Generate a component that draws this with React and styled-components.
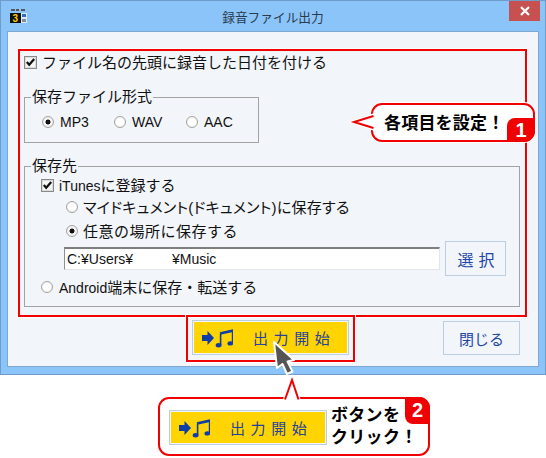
import React from "react";
import styled, { createGlobalStyle } from "styled-components";

const Global = createGlobalStyle`
  html, body { margin: 0; padding: 0; background: #fff; }
  * { box-sizing: border-box; }
`;

const UI = `"Liberation Sans", "Noto Sans CJK JP", sans-serif`;

const Page = styled.div`
  position: relative;
  width: 546px;
  height: 458px;
  overflow: hidden;
  background: #fff;
  font-family: ${UI};
  font-size: 15px;
  color: #111;
`;

const Win = styled.div`
  width: 546px;
  height: 375px;
  display: flex;
  flex-direction: column;
  background: #8ac4f9;
  border: 1px solid #6f9cc9;
`;

const TitleBar = styled.div`
  position: relative;
  height: 30px;
  flex: none;
  display: flex;
  align-items: center;
  justify-content: center;
  color: #2b3a4c;
  font-size: 12.7px;
`;

const AppIcon = styled.svg`
  position: absolute;
  left: 9px;
  top: 7px;
`;

const CloseBtn = styled.div`
  position: absolute;
  right: 5px;
  top: 0;
  width: 31px;
  height: 20px;
  background: #c75050;
  display: flex;
  align-items: center;
  justify-content: center;
`;

const Client = styled.div`
  flex: 1;
  margin: 0 6px 7px 6px;
  background: #f2f5f9;
  border: 1px solid #7fa8d0;
  padding: 20px 17px 0 16px;
  display: flex;
  flex-direction: column;
`;

const Row = styled.div`
  display: flex;
  align-items: center;
  height: 20px;
  margin-left: ${(p) => p.$indent || 0}px;
  margin-top: ${(p) => p.$top || 0}px;
  flex: none;
  white-space: nowrap;
`;

const Label = styled.span`
  margin-bottom: 2px;
  letter-spacing: ${(p) => p.$ls || 0}px;
  font-feature-settings: ${(p) => (p.$tight ? '"palt"' : "normal")};
`;

const Box = styled.span`
  width: 13px;
  height: 13px;
  flex: none;
  margin-right: 5px;
  background: #f6f6f6;
  border: 1px solid #8a8a8a;
  box-shadow: inset 0 0 0 1px #dcdcdc;
  display: flex;
  align-items: center;
  justify-content: center;
`;

const Dot = styled.span`
  width: 12px;
  height: 12px;
  flex: none;
  margin-right: ${(p) => p.$gap || 6}px;
  border-radius: 50%;
  background: ${(p) => (p.$on ? "radial-gradient(circle, #111 0 2.2px, #f6f6f6 2.8px)" : "#fff")};
  border: 1px solid #a4a4a4;
  box-shadow: inset 0 0 1px #ccc, 0 0 1px #eee;
`;

const RadioItem = styled.div`
  display: flex;
  align-items: center;
  width: 72px;
`;

const Lat = styled.span`
  font-size: 14px;
`;

const Group = styled.fieldset`
  margin: ${(p) => p.$top}px 0 0 0;
  width: ${(p) => p.$width}px;
  padding: 0 0 ${(p) => p.$pb}px 6px;
  border: 1px solid #a3a3a3;
  flex: none;
`;

const Legend = styled.legend`
  padding: 0 1px;
  margin: 0;
  height: 18px;
  line-height: 18px;
`;

const PathRow = styled.div`
  display: flex;
  align-items: center;
  gap: 5px;
  height: 35px;
  margin-left: 33px;
`;

const PathField = styled.div`
  width: 376px;
  height: 23px;
  background: #fff;
  border-style: solid;
  border-width: 2px 1px 1px 1px;
  border-color: #7e7e7e #e3e6e9 #e3e6e9 #8f8f8f;
  padding-left: 2px;
  line-height: 20px;
  font-size: 14px;
  white-space: pre;
`;

const Btn = styled.div`
  width: ${(p) => p.$w}px;
  height: ${(p) => p.$h}px;
  flex: none;
  display: flex;
  align-items: center;
  justify-content: center;
  margin-top: ${(p) => p.$top || 0}px;
  padding-left: ${(p) => p.$pl || 0}px;
  border: 1px solid #bccfe0;
  background: #f2f5f9;
  color: #2347a8;
  font-size: ${(p) => p.$fs || 15}px;
  letter-spacing: ${(p) => p.$ls || 0}px;
`;

const Footer = styled.div`
  display: flex;
  align-items: flex-start;
  margin: 13px 1px 0 168px;
  justify-content: space-between;
`;

const StartOuter = styled.div`
  width: ${(p) => p.$w}px;
  height: ${(p) => p.$h}px;
  flex: none;
  padding: 1px;
  border: 1px solid #bccfe0;
  background: #f2f5f9;
`;

const StartInner = styled.div`
  width: 100%;
  height: 100%;
  background: #ffd400;
  display: flex;
  align-items: center;
  padding-left: 8px;
  color: #24429a;
  font-size: 15px;
  letter-spacing: 5.6px;
`;

const StartLabel = styled.span`
  margin-left: 20px;
`;

/* overlays */
const RedFrame = styled.div`
  position: absolute;
  left: ${(p) => p.$x}px;
  top: ${(p) => p.$y}px;
  width: ${(p) => p.$w}px;
  height: ${(p) => p.$h}px;
  border: 2px solid #f00000;
  outline: 1px solid #fff;
`;

const Bubble = styled.div`
  position: absolute;
  left: ${(p) => p.$x}px;
  top: ${(p) => p.$y}px;
  width: ${(p) => p.$w}px;
  height: ${(p) => p.$h}px;
  background: #fff;
  border: 2px solid #f00000;
  border-radius: 11px;
  box-shadow: 0 0 0 1px #fff;
`;

const BubbleText = styled.div`
  font-family: "Noto Sans CJK JP", sans-serif;
  font-weight: 700;
  font-size: 17px;
  line-height: 22px;
  color: #000;
  position: absolute;
  white-space: nowrap;
`;

const Callout1Text = styled(BubbleText)`
  left: 11px;
  top: 6px;
  letter-spacing: 0.2px;
`;

const Callout2Text = styled(BubbleText)`
  left: 171px;
  top: 4px;
  letter-spacing: 0.3px;
`;

const Badge = styled.div`
  position: absolute;
  right: -2px;
  background: #f00000;
  color: #fff;
  font-family: "Liberation Sans", sans-serif;
  font-weight: 700;
  font-size: 20px;
  display: flex;
  align-items: center;
  justify-content: center;
`;

const BadgeBottom = styled(Badge)`
  bottom: -2px;
  width: 28px;
  height: 24px;
  border-radius: 8px 0 11px 0;
`;

const BadgeTop = styled(Badge)`
  top: -2px;
  width: 25px;
  height: 27px;
  border-radius: 0 11px 0 8px;
`;

const Tail = styled.svg`
  position: absolute;
  overflow: visible;
  left: ${(p) => p.$x}px;
  top: ${(p) => p.$y}px;
`;

const MiniBtn = styled.div`
  position: absolute;
  left: 9px;
  top: 11px;
`;

const Arrow = () => (
  <svg width="31" height="22" viewBox="0 0 31 22" style={{ flex: "none" }}>
    <path d="M0 8h5.5V4l6.5 7-6.5 7v-4H0z" fill="#0f3da8" />
    <path d="M18.6 18V7M30.6 16V4" stroke="#0f3da8" strokeWidth="1.6" fill="none" />
    <path d="M18 6.6L31.2 3.6" stroke="#0f3da8" strokeWidth="2.6" fill="none" />
    <ellipse cx="16.6" cy="18.2" rx="2.9" ry="2.2" fill="#0f3da8" />
    <ellipse cx="28.4" cy="16.4" rx="2.9" ry="2.2" fill="#0f3da8" />
  </svg>
);

const Check = () => (
  <svg width="11" height="11" viewBox="0 0 11 11">
    <path d="M1.8 5l2.4 2.8L9.2 2" stroke="#111" strokeWidth="2.2" fill="none" />
  </svg>
);

const StartButton = ({ w, h }) => (
  <StartOuter $w={w} $h={h}>
    <StartInner>
      <Arrow />
      <StartLabel>出力開始</StartLabel>
    </StartInner>
  </StartOuter>
);

export default function App() {
  return (
    <Page>
      <Global />
      <Win>
        <TitleBar>
          <AppIcon width="17" height="16" viewBox="0 0 17 16">
            <rect x="1" y="1" width="4" height="2" fill="#555" />
            <rect x="6" y="1" width="3" height="2" fill="#555" />
            <rect x="11" y="1" width="4" height="2" fill="#555" />
            <rect x="0" y="5" width="11" height="10" fill="#111" />
            <text x="2.5" y="14" fontSize="10" fontWeight="700" fill="#f4d000" fontFamily="Liberation Sans">3</text>
            <rect x="11" y="5" width="6" height="10" fill="#dfe8f2" />
            <rect x="12" y="6" width="4" height="3" fill="#2f6fb5" />
            <rect x="12" y="11" width="4" height="3" fill="#7d8ea0" />
          </AppIcon>
          録音ファイル出力
          <CloseBtn>
            <svg width="10" height="10" viewBox="0 0 10 10">
              <path d="M1 1l8 8M9 1l-8 8" stroke="#fff" strokeWidth="2.2" />
            </svg>
          </CloseBtn>
        </TitleBar>
        <Client>
          <Row>
            <Box><Check /></Box>
            <Label>ファイル名の先頭に録音した日付を付ける</Label>
          </Row>
          <Group $top={16} $width={232} $pb={10}>
            <Legend>保存ファイル形式</Legend>
            <Row $top={6} $indent={11}>
              <RadioItem><Dot $on /><Lat>MP3</Lat></RadioItem>
              <RadioItem><Dot /><Lat>WAV</Lat></RadioItem>
              <RadioItem><Dot /><Lat>AAC</Lat></RadioItem>
            </Row>
          </Group>
          <Group $top={14} $width={496} $pb={9}>
            <Legend>保存先</Legend>
            <Row $indent={10}>
              <Box><Check /></Box>
              <Label><Lat>iTunes</Lat>に登録する</Label>
            </Row>
            <Row $top={2} $indent={35}>
              <Dot $gap={5} />
              <Label $tight $ls={0.25}>マイドキュメント(ドキュメント)に保存する</Label>
            </Row>
            <Row $top={4} $indent={35}>
              <Dot $on $gap={5} />
              <Label $ls={0.5}>任意の場所に保存する</Label>
            </Row>
            <PathRow>
              <PathField>{"C:¥Users¥          ¥Music"}</PathField>
              <Btn $w={61} $h={35} $ls={5} $fs={16} $pl={6}>選択</Btn>
            </PathRow>
            <Row $top={1} $indent={10}>
              <Dot />
              <Label><Lat>Android</Lat>端末に保存・転送する</Label>
            </Row>
          </Group>
          <Footer>
            <StartButton w={157} h={35} />
            <Btn $w={77} $h={34} $top={1}>閉じる</Btn>
          </Footer>
        </Client>
      </Win>

      <RedFrame $x={18} $y={49} $w={509} $h={268} />
      <RedFrame $x={186} $y={315} $w={169} $h={47} />

      <Bubble $x={371} $y={103} $w={164} $h={39}>
        <Callout1Text>各項目を設定！</Callout1Text>
        <BadgeBottom>1</BadgeBottom>
      </Bubble>
      <Tail $x={352} $y={113} width="22" height="18" viewBox="0 0 22 18">
        <path d="M21.5 2.5L2 9l19.5 6.5" fill="#fff" stroke="#fff" strokeWidth="4" />
        <path d="M21.5 3L2 9l19.5 6" fill="#fff" stroke="#f00000" strokeWidth="2" />
      </Tail>

      <Bubble $x={158} $y={397} $w={272} $h={59}>
        <MiniBtn><StartButton w={158} h={35} /></MiniBtn>
        <Callout2Text>ボタンを<br />クリック！</Callout2Text>
        <BadgeTop>2</BadgeTop>
      </Bubble>
      <Tail $x={284} $y={378} width="16" height="22" viewBox="0 0 16 22">
        <path d="M1 21.5L8 2l6.5 19.5" fill="#fff" stroke="#fff" strokeWidth="4" />
        <path d="M1 21.5L8 2l6.5 19.5" fill="#fff" stroke="#f00000" strokeWidth="2" />
      </Tail>

      <Tail $x={272} $y={340} width="26" height="36" viewBox="0 0 26 36">
        <path
          d="M2 2L22 20 15.5 21.5 20.5 31.5 15 34 10.5 24 5 28Z"
          fill="#555"
          stroke="#fff"
          strokeWidth="2"
          strokeLinejoin="round"
        />
      </Tail>
    </Page>
  );
}
